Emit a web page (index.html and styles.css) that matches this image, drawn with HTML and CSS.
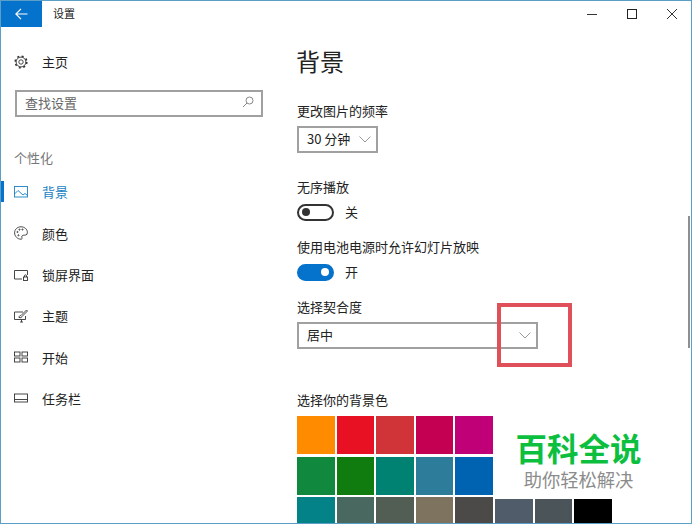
FILE: index.html
```html
<!DOCTYPE html>
<html lang="zh-CN">
<head>
    <meta charset="UTF-8">
    <title>设置</title>
    <link rel="stylesheet" href="styles.css">
</head>
<body>
    <div class="window">
        <div class="titlebar">
            <div class="backBtn">
                <svg width="13" height="12" viewBox="0 0 13 12"><path d="M6 .8.9 6 6 11.200M.9 6H12.500" fill="none" stroke="#fff" stroke-width="1.200"/></svg>
            </div>
            <div class="appName">设置</div>
            <div class="winBtns">
                <svg width="12" height="12" viewBox="0 0 12 12"><path d="M1 6.500h10" stroke="#333" stroke-width="1"/></svg>
                <svg width="12" height="12" viewBox="0 0 12 12"><rect x="1.500" y="1.500" width="9" height="9" fill="none" stroke="#222" stroke-width="1"/></svg>
                <svg width="12" height="12" viewBox="0 0 12 12"><path d="M1 1l10 10M11 1 1 11" stroke="#333" stroke-width="1"/></svg>
            </div>
        </div>

        <div class="content">
            <div class="sidebar">
                <div class="navItem home">
                    <svg class="icon" viewBox="0 0 14 14"><circle cx="7" cy="7" r="2.200"/><circle cx="7" cy="7" r="4.900"/><circle class="teeth" cx="7" cy="7" r="5.800"/></svg>
                    <span>主页</span>
                </div>
                <div class="search">
                    <span>查找设置</span>
                    <svg width="12" height="12" viewBox="0 0 12 12"><circle cx="7.500" cy="4.500" r="3.500" fill="none" stroke="#888"/><path d="M5 7 1 11" stroke="#888"/></svg>
                </div>
                <div class="navHeading">个性化</div>
                <div class="navList">
                    <div class="navItem selected">
                        <svg class="icon" viewBox="0 0 14 14"><rect x=".5" y="1.500" width="13" height="10.500"/><path d="M.5 9 4 5.500 9 10l2-1.500 2.500 2"/></svg>
                        <span>背景</span>
                    </div>
                    <div class="navItem">
                        <svg class="icon" viewBox="0 0 14 14"><path d="M7 .8C3.300.8.600 3.400.6 6.800c0 3.500 2.900 6.400 6.400 6.400.9 0 1.300-.7 1-1.400-.5-1.100-.2-2.300 1.200-2.500 1.700-.2 4.200.2 4.200-2.700C13.400 3.200 10.600.8 7 .8z"/><circle cx="3.500" cy="6" r=".6"/><circle cx="5.500" cy="3.600" r=".6"/><circle cx="8.500" cy="3.500" r=".6"/><circle cx="4.500" cy="9.300" r=".6"/></svg>
                        <span>颜色</span>
                    </div>
                    <div class="navItem">
                        <svg class="icon" viewBox="0 0 14 14"><path d="M8 11H.5V2.500h13V7"/><rect x="9.500" y="9" width="4" height="3.500"/><path d="M10.500 9V7.800a1 1 0 0 1 2 0V9"/></svg>
                        <span>锁屏界面</span>
                    </div>
                    <div class="navItem">
                        <svg class="icon" viewBox="0 0 14 14"><path d="M9 3H.5v7.500h11V7M6 13h3M7.500 10.500V13M5 8.500c0-1.500 1-2 2-2l5.500-5.500 1 1L8 7.500c0 1-1.500 1.500-3 1z"/></svg>
                        <span>主题</span>
                    </div>
                    <div class="navItem">
                        <svg class="icon" viewBox="0 0 14 14"><rect x=".5" y="2" width="5.500" height="4"/><rect x="8" y="2" width="5.500" height="4"/><rect x=".5" y="8" width="5.500" height="4"/><rect x="8" y="8" width="5.500" height="4"/></svg>
                        <span>开始</span>
                    </div>
                    <div class="navItem">
                        <svg class="icon" viewBox="0 0 14 14"><rect x=".5" y="3" width="13" height="8"/><path d="M.5 8.500h13"/></svg>
                        <span>任务栏</span>
                    </div>
                </div>
            </div>

            <div class="main">
                <h1>背景</h1>

                <div class="label first">更改图片的频率</div>
                <div class="select small">
                    <span>30 分钟</span>
                    <svg width="12" height="7" viewBox="0 0 12 7"><path d="M.5.5 6 6 11.500.5" fill="none" stroke="#999"/></svg>
                </div>

                <div class="label group">无序播放</div>
                <div class="toggleRow">
                    <div class="toggle"></div>
                    <span>关</span>
                </div>

                <div class="label">使用电池电源时允许幻灯片放映</div>
                <div class="toggleRow">
                    <div class="toggle on"></div>
                    <span>开</span>
                </div>

                <div class="label">选择契合度</div>
                <div class="select wide">
                    <span>居中</span>
                    <svg width="12" height="7" viewBox="0 0 12 7"><path d="M.5.5 6 6 11.500.5" fill="none" stroke="#999"/></svg>
                </div>

                <div class="label colors">选择你的背景色</div>
                <div class="swatches">
                    <div style="background:#ff8c00"></div>
                    <div style="background:#e81123"></div>
                    <div style="background:#d13438"></div>
                    <div style="background:#c30052"></div>
                    <div style="background:#bf0077"></div>
                    <div></div>
                    <div></div>
                    <div></div>
                    <div style="background:#10893e"></div>
                    <div style="background:#107c10"></div>
                    <div style="background:#008272"></div>
                    <div style="background:#2d7d9a"></div>
                    <div style="background:#0063b1"></div>
                    <div></div>
                    <div></div>
                    <div></div>
                    <div style="background:#038387"></div>
                    <div style="background:#486860"></div>
                    <div style="background:#525e54"></div>
                    <div style="background:#7e735f"></div>
                    <div style="background:#4c4a48"></div>
                    <div class="low" style="background:#515c6b"></div>
                    <div class="low" style="background:#4a5459"></div>
                    <div class="low" style="background:#000000"></div>
                </div>
            </div>
        </div>

        <div class="scrollThumb"></div>
        <div class="redBox"></div>
        <div class="watermark">
            <div class="wmTitle">百科全说</div>
            <div class="wmSub">助你轻松解决</div>
        </div>
    </div>
</body>
</html>
```

FILE: styles.css
```css
html, body{
    margin: 0;
    height: 100%;
    overflow: hidden;
    background: #fff;
}
.window{
    position: relative;
    box-sizing: border-box;
    width: 692px;
    height: 524px;
    border: 1px solid #5b9fc6;
    overflow: hidden;
    font-family: "Noto Sans CJK SC", "Liberation Sans", sans-serif;
    font-size: 13px;
    color: #222;
}
.titlebar{
    display: flex;
    align-items: center;
    height: 26px;
}
.backBtn{
    display: flex;
    align-items: center;
    justify-content: center;
    width: 41px;
    height: 26px;
    background: #0572cc;
}
.appName{
    margin-left: 11px;
    padding-bottom: 2px;
    font-size: 11px;
}
.winBtns{
    display: flex;
    gap: 28px;
    margin-left: auto;
    margin-right: 13px;
}
.content{
    display: flex;
}

/* left panel */
.sidebar{
    width: 280px;
    flex-shrink: 0;
}
.icon{
    width: 14px;
    height: 14px;
    fill: none;
    stroke: #333;
    stroke-width: .9;
}
.icon .teeth{
    stroke-width: 1.600;
    stroke-dasharray: 2 2.555;
}
.navItem{
    position: relative;
    display: flex;
    align-items: center;
    gap: 14px;
    height: 41.300px;
    padding-left: 13px;
}
.navItem.home{
    margin-top: 14px;
}
.navItem.home span{
    padding-bottom: 1px;
}
.navItem.selected{
    color: #1a7fc4;
}
.navItem.selected .icon{
    stroke: #1a7fc4;
}
.navItem.selected::before{
    content: "";
    position: absolute;
    left: -1px;
    top: 10px;
    width: 4px;
    height: 21px;
    background: #0572cc;
}
.search{
    display: flex;
    align-items: center;
    justify-content: space-between;
    box-sizing: border-box;
    width: 248px;
    height: 27px;
    margin: 7.500px 0 0 14px;
    padding: 0 7px 2px 8px;
    border: 2px solid #a0a0a0;
    color: #666;
}
.navHeading{
    margin: 32px 0 0 13px;
    line-height: 18px;
    color: #777;
}
.navList{
    margin-top: 4.500px;
}

/* right panel */
.main{
    flex: 1;
    padding-left: 16px;
}
h1{
    margin: 17px 0 0 -1px;
    font-size: 24px;
    font-weight: 400;
    line-height: 34px;
}
.label{
    margin-top: 17px;
    line-height: 18px;
}
.label.first{
    margin-top: 24px;
}
.label.group{
    margin-top: 25px;
}
.label.colors{
    margin-top: 42px;
}
.select{
    display: flex;
    align-items: center;
    justify-content: space-between;
    box-sizing: border-box;
    height: 27px;
    margin-top: 6px;
    padding: 0 5px 2px 8px;
    border: 2px solid #a0a0a0;
}
.select svg{
    margin-top: 2px;
}
.select.small{
    width: 81px;
}
.select.wide{
    width: 241px;
}
.toggleRow{
    display: flex;
    align-items: center;
    gap: 11px;
    height: 18px;
    margin-top: 7px;
}
.toggleRow span{
    padding-bottom: 1px;
}
.toggle{
    position: relative;
    box-sizing: border-box;
    width: 37px;
    height: 17px;
    border: 2px solid #333;
    border-radius: 9px;
}
.toggle::after{
    content: "";
    position: absolute;
    left: 3px;
    top: 2.500px;
    width: 8px;
    height: 8px;
    border-radius: 50%;
    background: #333;
}
.toggle.on{
    background: #0572cc;
    border-color: #0572cc;
}
.toggle.on::after{
    left: auto;
    right: 3px;
    background: #fff;
}
.swatches{
    display: grid;
    grid-template-columns: repeat(8, 37.600px);
    grid-auto-rows: 38px;
    gap: 2.500px 2px;
    margin-top: 7px;
}
.swatches .low{
    margin-top: 2px;
}

/* things on top of the page */
.scrollThumb{
    position: absolute;
    right: 1px;
    top: 215px;
    width: 2px;
    height: 132px;
    background: #8f8f8f;
}
.redBox{
    position: absolute;
    left: 496px;
    top: 302px;
    box-sizing: border-box;
    width: 75px;
    height: 64px;
    border: 4px solid #e0505a;
}
.watermark{
    position: absolute;
    left: 504px;
    top: 422px;
    width: 147px;
    padding: 5px 0 6px;
    text-align: center;
    background: #fff;
}
.wmTitle{
    font-size: 31.500px;
    font-weight: 700;
    line-height: 39px;
    color: #0cbf3f;
}
.wmSub{
    font-size: 18.300px;
    line-height: 24px;
    color: #8c8c8c;
}
```
